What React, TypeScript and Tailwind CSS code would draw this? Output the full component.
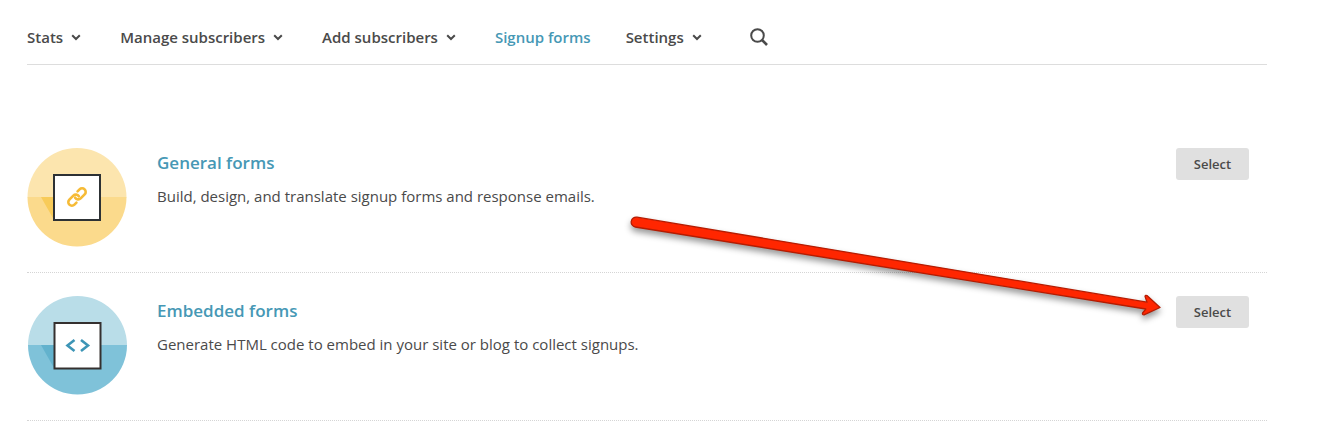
import type { ReactNode } from "react";

const navItems = [
    { label: "Stats", menu: true, active: false },
    { label: "Manage subscribers", menu: true, active: false },
    { label: "Add subscribers", menu: true, active: false },
    { label: "Signup forms", menu: false, active: true },
    { label: "Settings", menu: true, active: false },
];

const Chevron = () => (
    <svg className="ml-1 h-[18px] w-[18px]" viewBox="0 0 18 18" fill="none" stroke="currentColor" strokeWidth="2" aria-hidden="true">
        <path d="M5.2 7.2 L9 11 L12.8 7.2" />
    </svg>
);

const NavBar = () => {
    return (
        <nav className="flex h-[65px] items-center border-b border-[#dddddd] pt-[9px]">
            <ul className="flex items-center gap-[35px]">
                {navItems.map((item) => (
                    <li key={item.label}>
                        <a
                            href="#"
                            className={
                                item.active
                                    ? "flex items-center text-[15px] leading-5 font-semibold text-[#4698b5]"
                                    : "flex items-center text-[15px] leading-5 font-semibold text-[#4a4a4a]"
                            }
                        >
                            {item.label}
                            {item.menu && <Chevron />}
                        </a>
                    </li>
                ))}
            </ul>
            <button type="button" aria-label="Search" className="ml-11 text-[#4a4a4a]">
                <svg className="h-[18px] w-[18px]" viewBox="0 0 18 18" fill="none" stroke="currentColor" aria-hidden="true">
                    <circle cx="7.5" cy="7.5" r="6.3" strokeWidth="2" />
                    <path d="M12 12 L17 17" strokeWidth="2.6" />
                </svg>
            </button>
        </nav>
    );
};

const GeneralIcon = () => (
    <svg className="size-[100px] shrink-0" viewBox="0 0 100 100" aria-hidden="true">
        <path d="M0.5 49.5 A49.5 49.5 0 0 1 99.5 49.5 Z" fill="#fce5ae" />
        <path d="M0.5 49 H99.5 A49.5 49.5 0 0 1 0.5 49 Z" fill="#fbda8c" />
        <path d="M14 49 H27 V72 Z" fill="#f8cb59" />
        <rect x="27" y="27" width="46" height="45" fill="#ffffff" stroke="#2d3134" strokeWidth="2" />
        <g transform="translate(50 49) rotate(-45)" fill="none" stroke="#f6bb36" strokeWidth="2.6" strokeLinecap="round">
            <path d="M-4.4 3.6 H-7.2 A3.6 3.6 0 0 1 -7.2 -3.6 H-1.6 A3.6 3.6 0 0 1 1.8 0.8" />
            <path d="M4.4 -3.6 H7.2 A3.6 3.6 0 0 1 7.2 3.6 H1.6 A3.6 3.6 0 0 1 -1.8 -0.8" />
        </g>
    </svg>
);

const EmbedIcon = () => (
    <svg className="size-[100px] shrink-0" viewBox="0 0 100 100" aria-hidden="true">
        <path d="M1 49.5 A49.5 49.5 0 0 1 100 49.5 Z" fill="#b9dde8" />
        <path d="M1 49 H100 A49.5 49.5 0 0 1 1 49 Z" fill="#7fc2d9" />
        <path d="M14 49 H27 V72 Z" fill="#63b2cd" />
        <rect x="27.5" y="27" width="46" height="45.5" fill="#ffffff" stroke="#35302f" strokeWidth="2" />
        <g fill="none" stroke="#3d95b6" strokeWidth="2.6">
            <path d="M47.5 44 L40.5 49.5 L47.5 55" />
            <path d="M54 44 L61 49.5 L54 55" />
        </g>
    </svg>
);

type FormRowProps = {
    icon: ReactNode;
    title: string;
    text: string;
};

const FormRow = ({ icon, title, text }: FormRowProps) => {
    return (
        <li className="flex items-start border-b border-dotted border-[#d5d5d5] pt-[23px] pb-6">
            {icon}
            <div className="ml-[30px] grow pt-[3px]">
                <h3 className="text-[17px] leading-6 font-semibold">
                    <a href="#" className="text-[#4698b5]">{title}</a>
                </h3>
                <p className="mt-[9px] text-[15px] leading-6 text-[#4a4a4a]">{text}</p>
            </div>
            <button type="button" className="mr-[18px] h-8 w-[73px] rounded-[3px] bg-[#e0e0e0] pt-0.5 text-[13px] font-semibold text-[#4a4a4a]">
                Select
            </button>
        </li>
    );
};

// Callout arrow pointing at the embedded forms button
const Arrow = () => (
    <svg className="pointer-events-none absolute top-[205px] right-[170px] h-[125px] w-[548px]" viewBox="620 205 548 125" aria-hidden="true">
        <path
            d="M637 217.2 L1147 302.2 L1145 296.4 Q1145.4 294.8 1147 295.6 L1160 307.5 L1144 314.8 Q1142 314.8 1142.6 313 L1145.8 309 L635.3 227 A4.9 4.9 0 0 1 637 217.2 Z"
            fill="#ff2600"
            stroke="#b51c02"
            strokeWidth="1.3"
            strokeLinejoin="round"
            className="drop-shadow-[0_4px_3px_rgba(0,0,0,0.4)]"
        />
    </svg>
);

const App = () => {
    return (
        <div className="relative bg-white pr-[71px] pl-[27px] font-['Open_Sans',sans-serif]">
            <NavBar />
            <ul className="mt-[60px]">
                <FormRow
                    icon={<GeneralIcon />}
                    title="General forms"
                    text="Build, design, and translate signup forms and response emails."
                />
                <FormRow
                    icon={<EmbedIcon />}
                    title="Embedded forms"
                    text="Generate HTML code to embed in your site or blog to collect signups."
                />
            </ul>
            <Arrow />
        </div>
    );
};

export default App;
